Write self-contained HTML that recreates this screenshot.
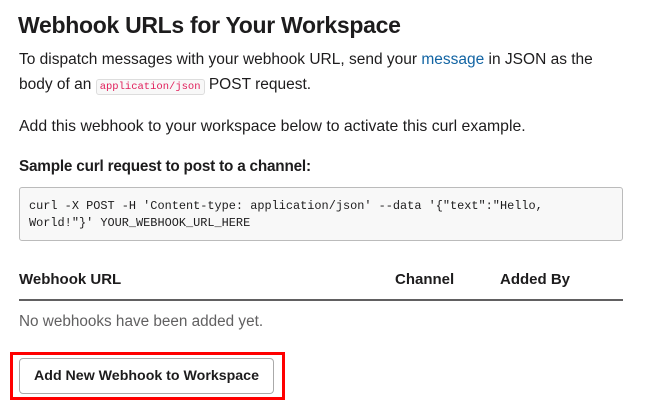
<!DOCTYPE html>
<html><head><meta charset="utf-8"><style>
*{margin:0;padding:0;box-sizing:border-box}
body{width:645px;height:416px;background:#fff;font-family:"Liberation Sans",sans-serif;color:#1d1c1d;position:relative;overflow:hidden}
.a{position:absolute;white-space:nowrap}
h1{font-size:23px;font-weight:bold;letter-spacing:-0.3px}
.p{font-size:15.5px;color:#1d1c1d}
code{font-family:"Liberation Mono",monospace;font-size:10.5px;color:#e01e5a;background:#f8f8f8;border:1px solid #ddd;border-radius:3px;padding:1px 3px}
pre{font-family:"Liberation Mono",monospace;font-size:11.9px;line-height:17px;color:#1d1c1d;white-space:pre !important}
</style></head><body>
<h1 class="a" style="left:18px;top:12px">Webhook URLs for Your Workspace</h1>
<div class="a p" style="left:19px;top:51px">To dispatch messages with your webhook URL, send your <span style="color:#1264a3">message</span> in JSON as the</div>
<div class="a p" style="left:19px;top:76px">body of an <code>application/json</code> POST request.</div>
<div class="a p" style="left:19px;top:118px;font-size:15.8px">Add this webhook to your workspace below to activate this curl example.</div>
<div class="a p" style="left:19px;top:158px;font-weight:bold;font-size:15.3px;letter-spacing:-0.2px">Sample curl request to post to a channel:</div>
<div class="a" style="left:19px;top:187px;width:604px;height:54px;background:#f8f8f8;border:1px solid #bbb;border-radius:3px"></div>
<pre class="a" style="left:29px;top:198px">curl -X POST -H 'Content-type: application/json' --data '{"text":"Hello,
World!"}' YOUR_WEBHOOK_URL_HERE</pre>
<div class="a p" style="left:19px;top:271px;font-weight:bold;font-size:15px">Webhook URL</div>
<div class="a p" style="left:395px;top:271px;font-weight:bold;font-size:15px">Channel</div>
<div class="a p" style="left:500px;top:271px;font-weight:bold;font-size:15px">Added By</div>
<div class="a" style="left:19px;top:299px;width:604px;height:2px;background:#616061"></div>
<div class="a p" style="left:19px;top:313px;color:#616061;font-size:15.3px">No webhooks have been added yet.</div>
<div class="a" style="left:10px;top:352px;width:275px;height:48px;border:3px solid #f00"></div>
<div class="a" style="left:19px;top:358px;width:255px;height:36px;border:1px solid #aaa;border-radius:4px;background:#fff;font-size:14.2px;font-weight:bold;text-align:center;line-height:34px">Add New Webhook to Workspace</div>
</body></html>
